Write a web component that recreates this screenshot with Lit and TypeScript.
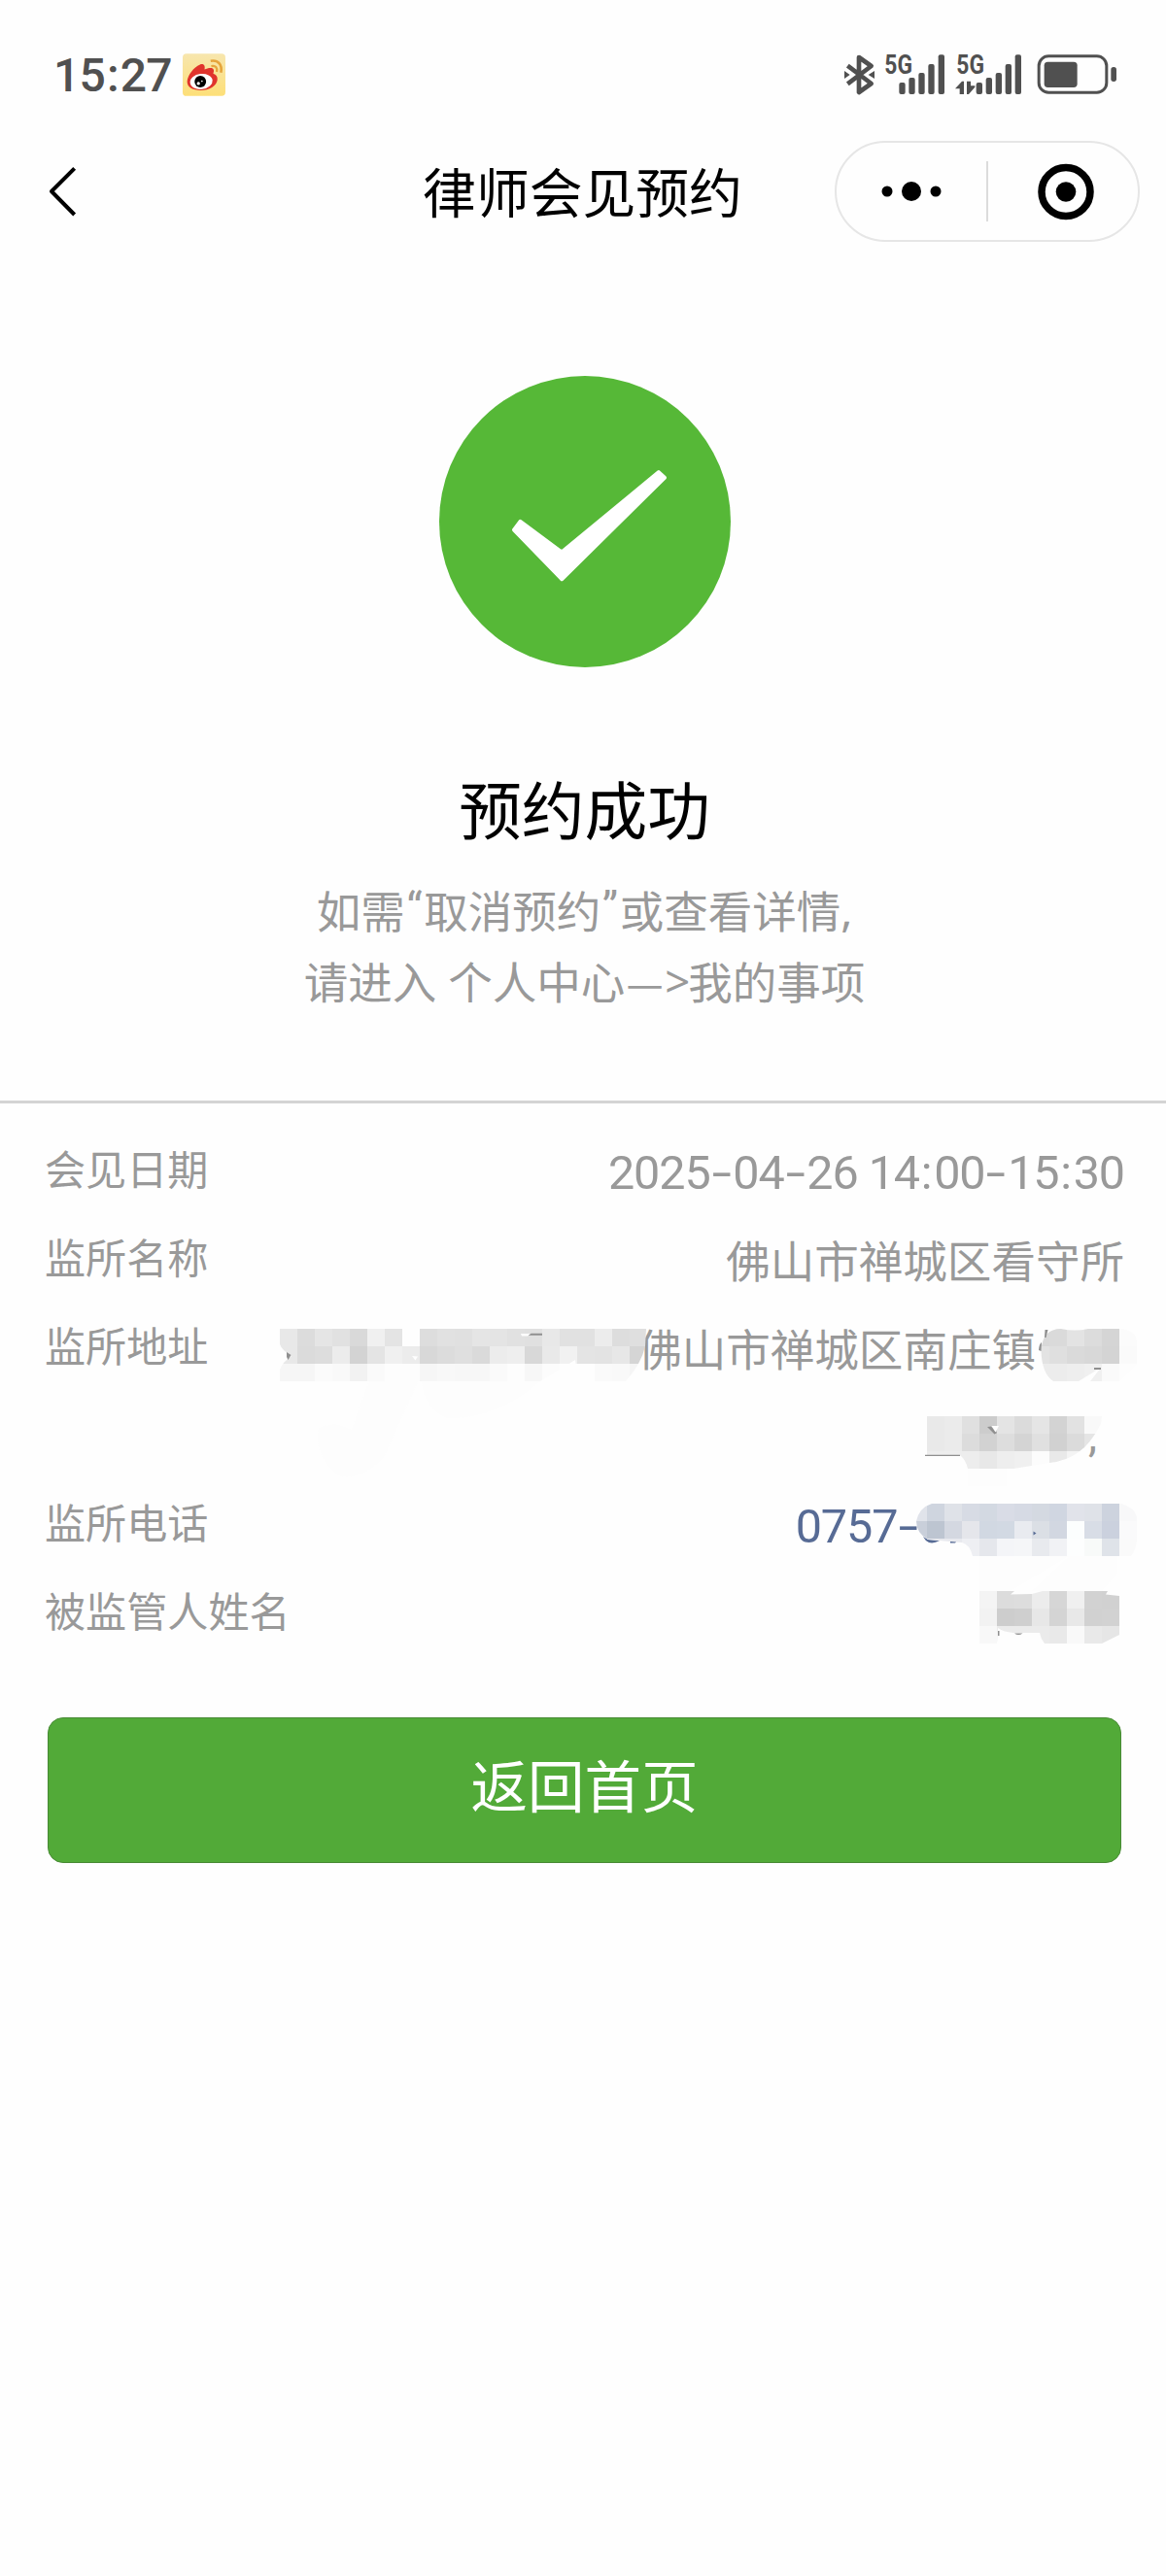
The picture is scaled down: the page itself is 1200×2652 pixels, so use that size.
import { LitElement, html, css, svg } from "lit";
import { customElement } from "lit/decorators.js";

const CELL = 18;

interface Mosaic {
  id: string;
  x: number;
  y: number;
  rows: string[];
  clip: string;
}

// Each row lists cell colours; two digits stand for a grey, six for a full colour.
const MOSAICS: Mosaic[] = [
  {
    id: "addr-a",
    x: 288,
    y: 1368,
    rows: [
      "e8 dc e5 e1 d9 f0 e4 fe dd e1 e0 e5 e4 e1 e0 e8 e1 e1 ec dd df",
      "e8 db dd ec d3 e4 f0 ec d8 dc df da ec ee d8 e9 f1 e4 e3 e7 d5",
      "f6 f6 fb f9 f2 fa fd fd f6 f8 f7 f7 fa fd f7 fc fe fe fa f9 f5",
    ],
    clip: "M288 1368H665L664 1386Q660 1404 644 1422H599Q593 1412 592 1400L556 1422H288V1410Q291 1402 300 1396Q290 1390 288 1384Z",
  },
  {
    id: "addr-b",
    x: 1062,
    y: 1368,
    rows: ["d9 da e3 dc d5 fb", "e3 df da d8 d4 fa", "ec ec ee f0 fa fd"],
    clip: "M1071.5 1390Q1073 1368 1092 1368Q1106 1371 1120 1368H1156Q1170 1371 1170 1382V1404L1152 1422H1122L1133 1408L1110 1422H1084Q1072 1414 1071.5 1390Z",
  },
  {
    id: "addr-c",
    x: 954,
    y: 1458,
    rows: [
      "e9 eb e0 cc e4 db e5 d3 e2 f9",
      "e9 eb dc d2 dd d4 e0 d1 db e5",
      "ed ed ed e8 ee f0 fc e9 f4 fb",
    ],
    clip: "M954 1458H1134L1133 1466Q1122 1487 1110 1495Q1098 1504 1080 1506L1043 1512H996Q994 1503 988 1498H954Z",
  },
  {
    id: "phone",
    x: 936,
    y: 1548,
    rows: [
      "e0e3ea cfd5df dfe2e8 d7dbe4 d3d9e2 d9dce6 d6dae4 d4d9e1 d0d6e1 e1e3ea dfe2e8 cdd3de f8f8f9",
      "c9cfda bdc5d1 d4d8e1 e5e6eb d1d8e2 d2d9e3 e9ebf0 dbdfe5 d2d7e1 fcfefe d8dde6 cbd1de fafafb",
      "e8e9ee e8e9ee e8e9ee eeeff3 e5e7ec f4f5f8 f5f6f8 e8eaee f1f2f5 fdfefe f8faf9 dfe3e9 fafafa",
    ],
    clip: "M959 1548H1154Q1168 1552 1170 1562V1586Q1169 1596 1164 1602H1001Q998 1590 990 1588L955 1585Q943 1578 943 1566Q946 1552 959 1548Z",
  },
  {
    id: "name",
    x: 1008,
    y: 1638,
    rows: [
      "f4 dc dd ec d6 f0 d2 d1",
      "f2 cd cf e7 d4 e8 d1 d2",
      "f8 eb eb eb e9 f9 e9 e6",
    ],
    clip: "M1008 1638H1044L1040 1641.5L1062 1641L1073 1638H1140L1138 1641.5L1152 1643V1683L1134 1692H1075Q1071 1687 1070 1681L1043 1681Q1032 1680 1027 1676L1026 1692H1008Z",
  },
];

const colour = (c: string) => "#" + (c.length === 2 ? c + c + c : c);

@customElement("app-root")
export class AppRoot extends LitElement {
  static styles = css`
    :host {
      display: block;
      height: 2652px;
      background: #fefefe;
      overflow: hidden;
      font-family: "Noto Sans CJK SC", sans-serif;
      color: #000;
    }
    svg {
      display: block;
      flex: none;
    }
    .status {
      box-sizing: border-box;
      height: 144px;
      padding: 10px 49px 0 55px;
      display: flex;
      align-items: center;
    }
    .time {
      font: 500 48px/60px Roboto, sans-serif;
      letter-spacing: -0.9px;
      padding-top: 2px;
      color: #505050;
      display: flex;
    }
    .time .colon {
      width: 16px;
      text-align: center;
    }
    .badge {
      margin-left: 11.5px;
    }
    .indicators {
      margin-left: auto;
      overflow: visible;
    }
    .gtext {
      font: 700 81px Roboto, sans-serif;
      fill: #505050;
    }
    .nav {
      height: 106px;
      display: grid;
      grid-template-columns: 400px 398px 402px;
      align-items: center;
    }
    .back {
      margin-left: 50px;
    }
    .nav-title {
      margin: 0;
      padding: 0 0 5px 1px;
      font-size: 54.8px;
      font-weight: 400;
      line-height: 80px;
      text-align: center;
      white-space: nowrap;
    }
    .capsule {
      box-sizing: border-box;
      width: 314px;
      height: 104px;
      margin-left: 61px;
      border: 2px solid #e6e6e6;
      border-radius: 52px;
      display: grid;
      grid-template-columns: 154px 2px 154px;
      align-items: center;
      justify-items: center;
    }
    .dots {
      margin-right: 1px;
    }
    .ring {
      margin-left: 5px;
    }
    .sep {
      width: 2px;
      height: 62px;
      background: #dcdcdc;
    }
    .hero {
      box-sizing: border-box;
      height: 886px;
      padding: 137px 0 0 3px;
      border-bottom: 3px solid #d4d4d4;
      display: flex;
      flex-direction: column;
      align-items: center;
    }
    .hero h2 {
      margin: 96px 0 20px;
      font-size: 64.7px;
      font-weight: 400;
      line-height: 97px;
    }
    .hero p {
      margin: 0;
      font-size: 45.5px;
      line-height: 72.7px;
      color: #999;
      white-space: nowrap;
      display: flex;
      justify-content: center;
    }
    .latin {
      font-family: "Noto Sans", sans-serif;
      display: inline-block;
      width: 24px;
      text-align: center;
    }
    .quote {
      font-family: Roboto, sans-serif;
      width: 19.4px;
    }
    .blank {
      width: 12px;
    }
    .emdash {
      display: flex;
      justify-content: center;
      width: 41px;
      transform: scaleX(0.94);
    }
    .comma {
      width: 12px;
    }
    .details {
      position: relative;
      padding: 20px 43px 0 46px;
    }
    .row {
      display: flex;
      justify-content: space-between;
      align-items: flex-start;
      height: 91px;
      line-height: 91px;
      color: #999;
    }
    .row.tall {
      height: 182px;
    }
    .label {
      font-size: 42.1px;
    }
    .value {
      margin-top: 4px;
      font-size: 45.54px;
      text-align: right;
    }
    .line {
      height: 91px;
      padding-right: 91px;
    }
    .line.rest {
      padding-right: 28px;
      font-family: Roboto, sans-serif;
      font-weight: 400;
    }
    .num {
      display: flex;
      margin-top: 5.5px;
      font-family: Roboto, sans-serif;
      font-size: 48.5px;
      font-weight: 400;
      letter-spacing: -1.1px;
    }
    .num i {
      font-style: normal;
      letter-spacing: 0;
      text-align: center;
      width: 15.2px;
    }
    .num .dash {
      width: 23.7px;
      transform: scaleX(1.5);
    }
    .num .space {
      width: 11px;
    }
    .phone {
      color: #576b95;
      padding-right: 210px;
    }
    .cover {
      position: absolute;
      left: 0;
      top: 0;
      pointer-events: none;
    }
    .home {
      box-sizing: border-box;
      display: block;
      width: 1105px;
      height: 150px;
      margin: 66px 0 0 49px;
      padding: 0 0 15px;
      border: 1.5px solid #488a35;
      border-radius: 16px;
      background: #52aa38;
      color: #fff;
      font: 400 58.5px/80px "Noto Sans CJK SC", sans-serif;
      text-align: center;
    }
  `;

  private renderBars(xs: number[]) {
    const tops = [165, 150, 135, 108, 79];
    return xs.map(
      (x, i) => svg`<rect x=${x} y=${tops[i]} width="19" height=${201 - tops[i]} rx="6"></rect>`
    );
  }

  private renderMosaic(m: Mosaic) {
    return svg`
      <clipPath id=${m.id}><path d=${m.clip}></path></clipPath>
      <g clip-path="url(#${m.id})" shape-rendering="crispEdges">
        ${m.rows.map((row, r) =>
          row.split(" ").map(
            (c, i) => svg`<rect x=${m.x + i * CELL} y=${m.y + r * CELL}
              width=${CELL} height=${CELL} fill=${colour(c)}></rect>`
          )
        )}
      </g>`;
  }

  render() {
    return html`
      <header class="status">
        <div class="time"><span>15</span><span class="colon">:</span><span>27</span></div>
        <svg class="badge" width="44" height="44" viewBox="564 75 133 132">
          <defs>
            <linearGradient id="wb" x1="0" y1="0" x2="0" y2="1">
              <stop offset="0" stop-color="#f7e6ae"></stop>
              <stop offset="1" stop-color="#fddf78"></stop>
            </linearGradient>
          </defs>
          <rect x="564" y="75" width="133" height="132" rx="12" fill="url(#wb)"></rect>
          <path fill="#e0342c" d="M578 162C579 142 598 118 618 109C629 105 635 112 632 124C643 119 656 117 660 124C662 129 660 133 659 137C668 140 673 146 672 156C670 176 647 189 620 189C596 189 578 180 578 162Z"></path>
          <ellipse cx="622" cy="162" rx="35" ry="24" transform="rotate(-7 622 162)" fill="#fff"></ellipse>
          <circle cx="619" cy="162" r="18" fill="#000"></circle>
          <circle cx="613" cy="168" r="5" fill="#fff"></circle>
          <circle cx="624" cy="161" r="2.5" fill="#fff"></circle>
          <path d="M651 98C674 94 688 109 683 134" fill="none" stroke="#e6a53c" stroke-width="8"></path>
          <path d="M653 114C666 111 673 119 670 132" fill="none" stroke="#e6a53c" stroke-width="7"></path>
        </svg>
        <svg class="indicators" width="284" height="64" viewBox="80 45 852 192" fill="#505050">
          <path d="M96 113L169 168L131 195V87L169 114L96 169" fill="none" stroke="#505050" stroke-width="14" stroke-linejoin="round"></path>
          <path d="M86 129L103 141L86 153ZM179 129L160 141L179 153Z"></path>
          <text class="gtext" x="210" y="138" textLength="86" lengthAdjust="spacingAndGlyphs">5G</text>
          ${this.renderBars([255, 285, 315, 345, 376])}
          <text class="gtext" x="432" y="138" textLength="86" lengthAdjust="spacingAndGlyphs">5G</text>
          <path d="M428 184L449 161H455V201H442V184ZM464 161H476V175H489V179L470 201H464Z"></path>
          ${this.renderBars([493, 523, 553, 583, 613])}
          <rect x="686.500" y="83.500" width="209" height="112" rx="30" fill="none" stroke="#505050" stroke-width="9"></rect>
          <rect x="703" y="101" width="102" height="79" rx="11"></rect>
          <rect x="909" y="117" width="17" height="45" rx="8"></rect>
        </svg>
      </header>

      <nav class="nav">
        <svg class="back" width="30" height="52" viewBox="150 423 90 156">
          <path d="M230 430L159 501L230 573" fill="none" stroke="#000" stroke-width="12" stroke-linejoin="round"></path>
        </svg>
        <h1 class="nav-title">律师会见预约</h1>
        <div class="capsule">
          <svg class="dots" width="62" height="20" viewBox="199 471 186 60">
            <circle cx="217" cy="501" r="16.500"></circle>
            <circle cx="292" cy="501" r="30"></circle>
            <circle cx="367" cy="501" r="16.500"></circle>
          </svg>
          <span class="sep"></span>
          <svg class="ring" width="60" height="60" viewBox="0 0 60 60">
            <circle cx="30" cy="30.500" r="25" fill="none" stroke="#000" stroke-width="7.500"></circle>
            <circle cx="30" cy="30.500" r="10.300"></circle>
          </svg>
        </div>
      </nav>

      <section class="hero">
        <svg width="300" height="300" viewBox="66 51 899 899">
          <circle cx="515.500" cy="500.500" r="449.500" fill="#56b837"></circle>
          <path fill="#fff" stroke="#fff" stroke-width="12" stroke-linejoin="round" d="M297 526L316 500L437 590Q444 594 450 590L743 348L761 365L444 678Z"></path>
        </svg>
        <h2>预约成功</h2>
        <p><span>如需</span><span class="latin quote">“</span><span>取消预约</span><span class="latin quote">”</span><span>或查看详情</span><span class="latin comma">,</span></p>
        <p><span>请进入</span><span class="blank"> </span><span>个人中心</span><span class="emdash">—</span><span class="latin gt">&gt;</span><span>我的事项</span></p>
      </section>

      <section class="details">
        <div class="row">
          <span class="label">会见日期</span>
          <span class="value num"><span>2025</span><i class="dash">-</i><span>04</span><i class="dash">-</i><span>26</span><i class="space"> </i><span>14</span><i>:</i><span>00</span><i class="dash">-</i><span>15</span><i>:</i><span>30</span></span>
        </div>
        <div class="row">
          <span class="label">监所名称</span>
          <span class="value">佛山市禅城区看守所</span>
        </div>
        <div class="row tall">
          <span class="label">监所地址</span>
          <div class="value">
            <div class="line">佛山市禅城区南庄镇</div>
            <div class="line rest">,</div>
          </div>
        </div>
        <div class="row">
          <span class="label">监所电话</span>
          <span class="value num phone"><span>0757</span><i class="dash">-</i></span>
        </div>
        <div class="row">
          <span class="label">被监管人姓名</span>
        </div>
        <svg class="cover" width="1200" height="580" viewBox="0 1136 1200 580">
          <g fill="#fdfdfd">
            <path d="M328 1470Q345 1462 362 1472L380 1422H430L395 1500Q370 1525 350 1520Q322 1498 328 1470Z"></path>
            <path d="M434 1422H556Q510 1462 460 1460Q436 1450 434 1422Z"></path>
            <path d="M996 1512H1036V1530H996ZM1008 1602H1150V1620L1134 1638H1062L1100 1602L1040 1638H1008Z"></path>
          </g>
          <path fill="#576b95" d="M950 1582L955 1585L967 1586Q961 1589.500 956 1588Q952 1586 950 1582ZM978 1586H985L983 1588.500H978Z"></path>
          ${MOSAICS.map((m) => this.renderMosaic(m))}
          <g fill="#8f8f8f">
            <path d="M295 1392L299.500 1395L296.500 1400L295 1397Z"></path>
            <path d="M544 1373.500L547 1372.800H558V1374.800H544Z"></path>
            <path d="M1075.500 1369H1078.500L1076.500 1377H1075ZM1069 1390Q1069.500 1383 1072 1382L1071.500 1391Z"></path>
            <path d="M1126 1408H1133V1410H1126Z"></path>
            <path d="M952 1497.800H988V1499H952Z"></path>
            <path d="M1016 1469L1020 1468.500L1026 1475L1023.500 1476.500Z"></path>
            <path d="M1027 1679H1028.500V1684H1027ZM1044 1681.500H1052.500Q1048 1684.500 1044 1681.500Z"></path>
          </g>
          <g fill="#fefefe">
            <path d="M536 1373H546L543 1375.500H537Z"></path>
            <path d="M424 1396L430 1396.500L427.500 1400.500Z"></path>
            <path d="M1020.500 1468H1028L1024.500 1474.500Z"></path>
          </g>
          <path fill="#576b95" d="M1063.500 1576.500L1066.500 1578.500L1063.500 1580.500Z"></path>
        </svg>
      </section>

      <button class="home">返回首页</button>
    `;
  }
}
